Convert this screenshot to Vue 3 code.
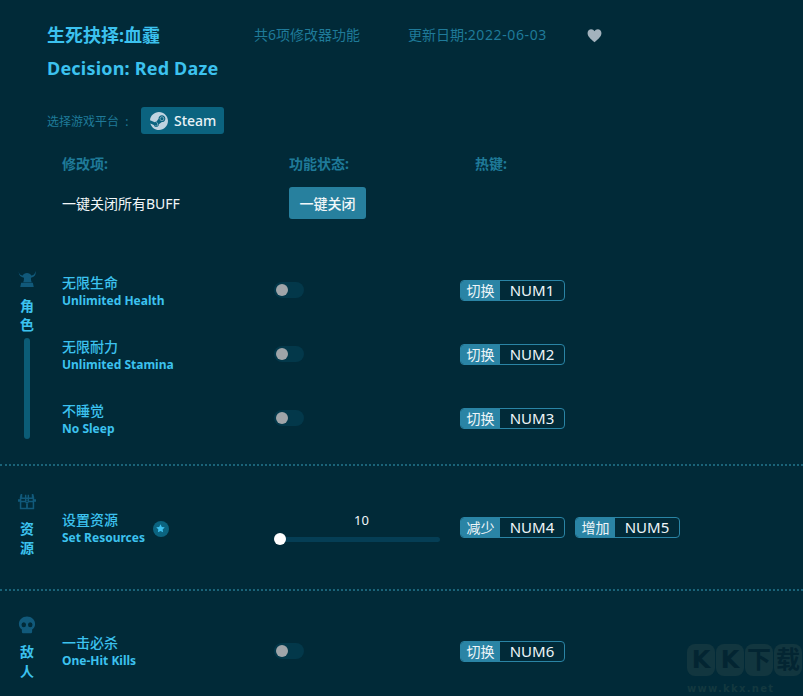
<script setup>
const groups = [
  { name: ['角', '色'], icon: 'helmet', bar: true, rows: [
    { zh: '无限生命', en: 'Unlimited Health', keys: [['切换', 'NUM1']] },
    { zh: '无限耐力', en: 'Unlimited Stamina', keys: [['切换', 'NUM2']] },
    { zh: '不睡觉', en: 'No Sleep', keys: [['切换', 'NUM3']] },
  ] },
  { name: ['资', '源'], icon: 'chest', rows: [
    { zh: '设置资源', en: 'Set Resources', star: true, slider: true, keys: [['减少', 'NUM4'], ['增加', 'NUM5']] },
  ] },
  { name: ['敌', '人'], icon: 'skull', rows: [
    { zh: '一击必杀', en: 'One-Hit Kills', keys: [['切换', 'NUM6']] },
  ] },
]
const logo = ['K', 'K', '下', '载']
</script>

<template>
  <div class="page">
    <header class="head">
      <div class="title-row">
        <h1 class="title">生死抉择:血霾</h1>
        <span class="meta count">共6项修改器功能</span>
        <span class="meta date">更新日期:<span class="digits">2022-06-03</span></span>
        <svg class="heart" viewBox="0 0 16 16"><path d="M8 15.200C3.600 11.600.6 9 .6 5.400.6 2.900 2.400 1.200 4.500 1.200c1.500 0 2.800.8 3.500 2.200.7-1.400 2-2.200 3.500-2.200 2.100 0 3.900 1.700 3.900 4.200 0 3.600-3 6.200-7.400 9.800z"/></svg>
      </div>
      <h2 class="title en">Decision: Red Daze</h2>
      <div class="platform">
        <span class="platform-label">选择游戏平台&nbsp;&nbsp;:</span>
        <button class="steam">
          <svg viewBox="0 0 24 24"><path d="M11.979 0C5.678 0 .511 4.860.022 11.037l6.432 2.658c.545-.371 1.203-.59 1.912-.59.063 0 .125.004.188.006l2.861-4.142V8.910c0-2.495 2.028-4.524 4.524-4.524 2.494 0 4.524 2.031 4.524 4.527s-2.030 4.525-4.524 4.525h-.105l-4.076 2.911c0 .052.004.105.004.159 0 1.875-1.515 3.396-3.390 3.396-1.635 0-3.016-1.173-3.331-2.727L.436 15.270C1.862 20.307 6.486 24 11.979 24c6.627 0 11.999-5.373 11.999-12S18.605 0 11.979 0zM7.540 18.210l-1.473-.61c.262.543.714.999 1.314 1.250 1.297.539 2.793-.076 3.332-1.375.263-.63.264-1.319.005-1.949s-.75-1.121-1.377-1.383c-.624-.26-1.290-.249-1.878-.03l1.523.63c.956.4 1.409 1.500 1.009 2.455-.397.957-1.497 1.410-2.454 1.012H7.540zm11.415-9.303c0-1.662-1.353-3.015-3.015-3.015-1.665 0-3.015 1.353-3.015 3.015 0 1.665 1.350 3.015 3.015 3.015 1.663 0 3.015-1.350 3.015-3.015zm-5.273-.005c0-1.252 1.013-2.266 2.265-2.266 1.249 0 2.266 1.014 2.266 2.266 0 1.251-1.017 2.265-2.266 2.265-1.253 0-2.265-1.014-2.265-2.265z"/></svg>
          Steam
        </button>
      </div>
    </header>

    <div class="table-head">
      <span>修改项:</span>
      <span>功能状态:</span>
      <span>热键:</span>
    </div>
    <div class="close-row">
      <span class="close-label">一键关闭所有BUFF</span>
      <button class="close-btn">一键关闭</button>
    </div>

    <section v-for="(g, gi) in groups" :key="gi" class="group" :class="'group-' + gi">
      <aside class="side">
        <svg v-if="g.icon === 'helmet'" class="side-icon" viewBox="0 0 20 20"><path d="M.8 1c.1 2.400 1 4 3.200 4.900.3.100.7.200 1.200.3C6 4.400 7.800 3.400 10 3.400s4 1 4.800 2.800c.5-.1.9-.2 1.200-.3C18.200 5 19.100 3.400 19.200 1c1 3 .3 5.700-3.200 7.100-.5.2-1.100.3-1.600.4-.1 1.900.1 3.500.8 5H5.800c.7-1.500.9-3.100.8-5-.5-.1-1.100-.2-1.600-.4C1.500 6.700.8 4 .8 1zM3.500 14.300h13l1 4.700h-15z"/></svg>
        <svg v-else-if="g.icon === 'chest'" class="side-icon" viewBox="0 0 20 20"><path fill-rule="evenodd" d="M3 1h1.700v4h3V2h1.600v3h1.400V2h1.600v3h3V1H17l1 3.500V7h2v2.600h-2V18H2V9.600H0V7h2V4.500zM3.700 6.800v1.900h4V6.800zm8.600 0v1.900h4V6.800zM9.100 7v2.800h1.800V7zM3.700 10.400v5.900h5.300v-4.700h2v4.700h5.300v-5.900h-4.600v.9H8.300v-.9zM9.300 8h1.400v.8H9.300z"/></svg>
        <svg v-else class="side-icon" viewBox="0 0 20 20"><path fill-rule="evenodd" d="M10 .5c5.100 0 9 3.600 9 8.400 0 2.800-1.300 5-3.300 6.200v2.400c0 1-.8 1.800-1.800 1.800H6.100c-1 0-1.800-.8-1.800-1.800v-2.400C2.300 13.900 1 11.700 1 8.900 1 4.100 4.900.5 10 .5zM6.400 7a2.500 2.800 0 1 0 0 5.600 2.500 2.800 0 0 0 0-5.600zm7.200 0a2.500 2.800 0 1 0 0 5.600 2.500 2.800 0 0 0 0-5.600z"/></svg>
        <span v-for="c in g.name" :key="c" class="side-char">{{ c }}</span>
        <i v-if="g.bar" class="side-bar"></i>
      </aside>
      <div class="rows">
        <div v-for="r in g.rows" :key="r.en" class="row">
          <div class="names">
            <div class="names-text">
              <div class="zh">{{ r.zh }}</div>
              <div class="en-name">{{ r.en }}</div>
            </div>
            <span v-if="r.star" class="star">
              <svg viewBox="0 0 16 16"><path d="M8 1.800l1.900 3.900 4.300.6-3.100 3 .7 4.300L8 11.600l-3.800 2 .7-4.300-3.100-3 4.300-.6z"/></svg>
            </span>
          </div>
          <div class="control">
            <div v-if="r.slider" class="slider">
              <span class="slider-value">10</span>
              <div class="slider-track"><i class="slider-knob"></i></div>
            </div>
            <div v-else class="toggle"><i class="toggle-knob"></i></div>
          </div>
          <div class="keys">
            <div v-for="k in r.keys" :key="k[1]" class="key">
              <span class="key-label">{{ k[0] }}</span>
              <span class="key-value">{{ k[1] }}</span>
            </div>
          </div>
        </div>
      </div>
    </section>

    <div class="watermark" aria-hidden="true">
      <div class="wm-logo"><span v-for="(c, i) in logo" :key="i" class="wm-char">{{ c }}</span></div>
      <div class="wm-url">www.kkx.net</div>
    </div>
  </div>
</template>

<style>
html, body { margin: 0; background: #012a38; }
</style>

<style scoped>
.page {
  position: relative;
  width: 803px;
  height: 696px;
  overflow: hidden;
  background: #012a38;
  font-family: "Noto Sans", "Noto Sans CJK SC", sans-serif;
  color: #3cc2ef;
}
.head { padding: 23px 0 0 47px; }
.title-row { display: flex; align-items: center; height: 24px; }
.title {
  margin: 0;
  font-size: 18px;
  line-height: 24px;
  font-weight: 700;
  color: #3cc2ef;
}
.title-row .title { width: 207px; }
.title.en { margin-top: 9px; letter-spacing: .2px; }
.meta { font-size: 14px; color: #1f7a99; line-height: 24px; }
.count { width: 154px; }
.date { width: 179px; }
.digits { letter-spacing: .6px; }
.heart { width: 15px; height: 15px; fill: #a3b2bd; }
.platform { display: flex; align-items: center; margin-top: 27px; height: 27px; }
.platform-label { width: 94px; font-size: 12px; color: #1f7a99; }
.steam {
  display: flex;
  align-items: center;
  gap: 6px;
  width: 83px;
  height: 27px;
  padding: 0 0 0 9px;
  border: 0;
  border-radius: 3px;
  background: #0b637f;
  color: #e8f2f6;
  font: 500 14px "Noto Sans", sans-serif;
}
.steam svg { width: 18px; height: 18px; fill: #bfd3e0; }
.table-head {
  display: grid;
  grid-template-columns: 227px 186px auto;
  padding-left: 62px;
  margin-top: 20px;
  font-size: 14px;
  line-height: 20px;
  font-weight: 700;
  color: #1f7a99;
}
.close-row {
  display: grid;
  grid-template-columns: 227px auto;
  align-items: center;
  height: 32px;
  padding-left: 62px;
  margin-top: 13px;
}
.close-label { font-size: 14px; color: #f2f7f9; }
.close-btn {
  width: 77px;
  height: 32px;
  padding: 0;
  border: 0;
  border-radius: 3px;
  background: #27809e;
  color: #f2f7f9;
  font: 500 14px "Noto Sans", "Noto Sans CJK SC", sans-serif;
}
.group { display: flex; padding-left: 7px; }
.group-0 { height: 210px; margin-top: 35px; border-bottom: 2px dotted #1a6378; }
.group-1 { height: 123px; border-bottom: 2px dotted #1a6378; }
.group-2 { height: 105px; }
.side {
  width: 40px;
  margin-right: 15px;
  display: flex;
  flex-direction: column;
  align-items: center;
}
.group-1 .side { padding-top: 27px; }
.group-2 .side { padding-top: 25px; }
.side-icon { width: 18px; height: 18px; fill: #11597a; flex: none; }
.group-0 .side-icon { margin-top: 16px; }
.side-char {
  font-size: 14px;
  line-height: 19px;
  font-weight: 700;
  color: #3cc2ef;
}
.side-icon + .side-char { margin-top: 8px; }
.side-bar {
  width: 6px;
  height: 101px;
  margin-top: 4px;
  border-radius: 3px;
  background: #0b5c76;
}
.rows { flex: 1; }
.group-0 .rows { padding-top: 4px; }
.group-1 .rows { padding-top: 39px; }
.group-2 .rows { padding-top: 38px; }
.row {
  display: grid;
  grid-template-columns: 212px 186px auto;
  align-items: center;
  height: 64px;
}
.group-1 .row, .group-2 .row { height: 44px; }
.names { display: flex; align-items: center; gap: 8px; padding-top: 3px; }
.group-2 .names { padding-top: 1px; }
.zh { font-size: 14px; line-height: 18px; font-weight: 500; color: #3cc2ef; }
.en-name { margin-top: 1px; font-size: 12px; line-height: 16px; font-weight: 700; color: #3cc2ef; }
.star {
  display: flex;
  align-items: center;
  justify-content: center;
  width: 16px;
  height: 16px;
  border-radius: 50%;
  background: #0b637f;
}
.star svg { width: 11px; height: 11px; fill: #3dc0ee; }
.toggle {
  position: relative;
  width: 30px;
  height: 16px;
  border-radius: 8px;
  background: #03384a;
}
.toggle-knob {
  position: absolute;
  left: 2px;
  top: 2px;
  width: 12px;
  height: 12px;
  border-radius: 50%;
  background: #a0a5a9;
}
.slider { position: relative; width: 166px; }
.slider-value {
  display: block;
  padding-left: 80px;
  font-size: 13px;
  line-height: 15px;
  color: #f2f7f9;
}
.slider-track {
  position: relative;
  height: 5px;
  margin: 9px 0 0 6px;
  border-radius: 3px;
  background: #053e55;
}
.slider-knob {
  position: absolute;
  left: -6px;
  top: -3.500px;
  width: 12px;
  height: 12px;
  border-radius: 50%;
  background: #fff;
}
.keys { display: flex; gap: 10px; }
.key {
  display: flex;
  height: 21px;
  border: 1px solid #2a84a5;
  border-radius: 4px;
  box-sizing: border-box;
  overflow: hidden;
}
.key-label {
  width: 39px;
  background: #2a84a5;
  color: #eef5f8;
  font-size: 14px;
  line-height: 19px;
  text-align: center;
}
.key-value {
  width: 64px;
  color: #eef5f8;
  font-size: 15px;
  line-height: 19px;
  text-align: center;
}
.watermark {
  position: absolute;
  left: 687px;
  bottom: 1px;
  width: 116px;
  font-family: "DejaVu Sans", "Noto Sans CJK SC", sans-serif;
  font-weight: 700;
}
.wm-logo { display: flex; gap: 1px; height: 32px; margin-bottom: 7px; }
.wm-char {
  width: 28px;
  height: 32px;
  border-radius: 8px;
  background: #12363f;
  color: #032532;
  font-size: 24px;
  line-height: 32px;
  text-align: center;
}
.wm-url { font-size: 10px; line-height: 12px; letter-spacing: 1.300px; color: #13383f; }
</style>
